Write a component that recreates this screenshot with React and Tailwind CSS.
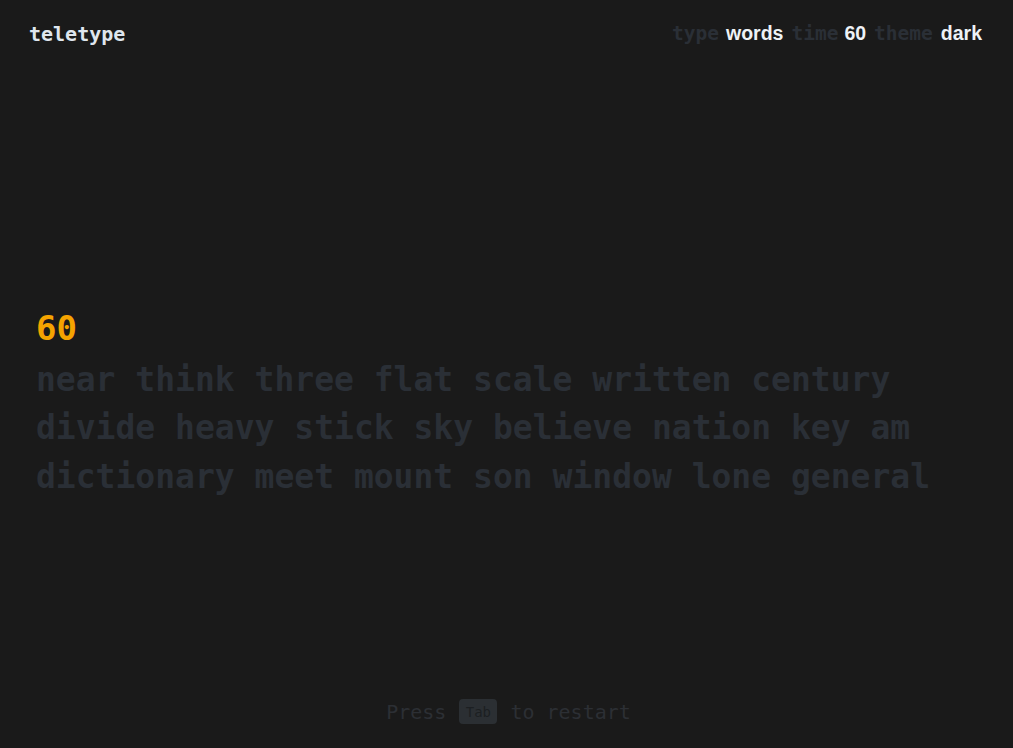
const mono = "font-['DejaVu_Sans_Mono','Liberation_Mono',monospace]";

const lines = [
    'near think three flat scale written century',
    'divide heavy stick sky believe nation key am',
    'dictionary meet mount son window lone general',
];

export default function App() {
    return (
        <div className="min-h-screen w-full bg-[#1a1a1a] flex flex-col">
            {/* Header */}
            <header className="flex items-center justify-between pl-[29px] pr-[31px] h-[68px]">
                <div className={`${mono} text-[20px] font-bold text-[#dfe6ee] leading-none`}>
                    teletype
                </div>
                <nav className="flex items-center gap-[8px] text-[19.5px] leading-none">
                    <div className="flex items-center gap-[7px]">
                        <span className={`${mono} font-bold text-[#2a2f36]`}>type</span>
                        <span className="font-['Liberation_Sans',Arial,sans-serif] font-bold text-[#eef2f6]">words</span>
                    </div>
                    <div className="flex items-center gap-[6px]">
                        <span className={`${mono} font-bold text-[#2a2f36]`}>time</span>
                        <span className="font-['Liberation_Sans',Arial,sans-serif] font-bold text-[#eef2f6]">60</span>
                    </div>
                    <div className="flex items-center gap-[8px]">
                        <span className={`${mono} font-bold text-[#2a2f36]`}>theme</span>
                        <span className="font-['Liberation_Sans',Arial,sans-serif] font-bold text-[#eef2f6]">dark</span>
                    </div>
                </nav>
            </header>

            {/* Typing area */}
            <main className="flex-1 flex flex-col justify-center px-[36px] pt-[42px]">
                <div className={`${mono} font-bold text-[34px] leading-[40px] text-[#f5a300] mb-[8px]`}>60</div>
                <div className={`${mono} font-bold text-[33px] leading-[48.5px] text-[#2a2f36]`}>
                    {lines.map((l) => (
                        <div key={l}>{l}</div>
                    ))}
                </div>
            </main>

            {/* Footer */}
            <footer className={`${mono} flex items-center justify-center gap-[13px] pb-[24px] pl-[4px] text-[20px] font-light text-[#2c2f34] leading-none`}>
                <span>Press</span>
                <kbd className={`${mono} bg-[#2b2f33] text-[#1c1f22] text-[14px] rounded-[4px] w-[38px] h-[25px] flex items-center justify-center`}>
                    Tab
                </kbd>
                <span>to restart</span>
            </footer>
        </div>
    );
}
